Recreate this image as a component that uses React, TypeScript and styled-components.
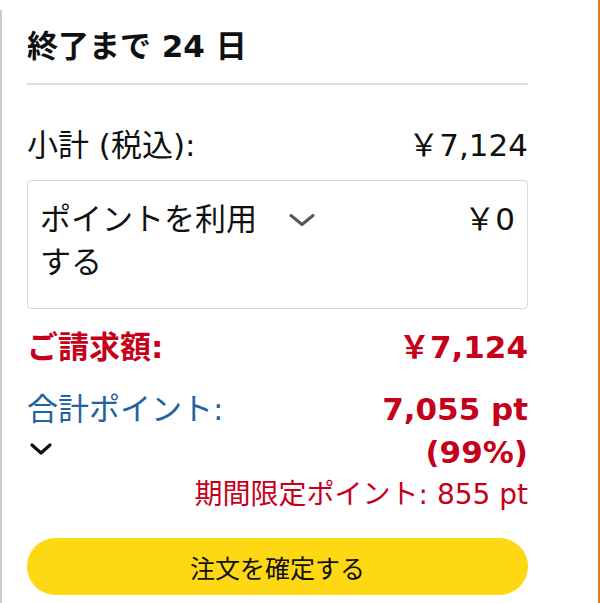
import styled, { createGlobalStyle } from 'styled-components'

const GlobalStyle = createGlobalStyle`
  html, body {
    margin: 0;
    padding: 0;
    background: #fff;
  }
  body {
    font-family: "DejaVu Sans", "Noto Sans CJK JP", sans-serif;
    color: #0f1111;
  }
`

const Page = styled.div`
  width: 600px;
  height: 603px;
  box-sizing: border-box;
  padding-top: 10px;
  border-right: 2px solid #e47911;
  overflow: hidden;
`

const Card = styled.div`
  height: 100%;
  box-sizing: border-box;
  border-left: 2px solid #cccccc;
  padding: 18px 70px 0 25px;
  display: flex;
  flex-direction: column;
`

const Title = styled.div`
  font-size: 31px;
  font-weight: 700;
  line-height: 36px;
  padding-bottom: 19px;
  border-bottom: 2px solid #dddddd;
`

const Row = styled.div<{ $top: number; $bold?: boolean; $red?: boolean }>`
  margin-top: ${(p) => p.$top}px;
  display: flex;
  justify-content: space-between;
  font-size: 31px;
  line-height: 40px;
  font-weight: ${(p) => (p.$bold ? 700 : 400)};
  color: ${(p) => (p.$red ? '#c7001a' : '#0f1111')};
`

const PointsBox = styled.div`
  margin-top: 15px;
  border: 1px solid #d5d9d9;
  border-radius: 4px;
  padding: 17px 12px 24px 12px;
  display: flex;
  align-items: flex-start;
  font-size: 31px;
  line-height: 43px;
`

const BoxLabel = styled.div`
  width: 226px;
`

const Chevron = styled.svg<{ $color: string }>`
  flex: none;
  stroke: ${(p) => p.$color};
  fill: none;
`

const BoxChevron = styled(Chevron)`
  margin: 16px 0 0 23px;
`

const BoxAmount = styled.div`
  margin-left: auto;
`

const PointsRow = styled.div`
  margin-top: 21px;
  display: flex;
  justify-content: space-between;
  font-size: 31px;
  line-height: 43px;
`

const PointsLeft = styled.div`
  display: flex;
  flex-direction: column;
  color: #2162a1;
`

const PointsChevron = styled(Chevron)`
  margin: 12px 0 0 3px;
`

const PointsRight = styled.div`
  text-align: right;
  font-weight: 700;
  color: #c7001a;
`

const Limited = styled.div`
  margin-top: 3px;
  text-align: right;
  font-size: 28px;
  line-height: 36px;
  color: #c7001a;
`

const PlaceButton = styled.button`
  margin-top: 25px;
  height: 57px;
  border: none;
  border-radius: 29px;
  background: #ffd814;
  font-family: inherit;
  font-size: 25px;
  color: #0f1111;
  cursor: pointer;
`

export default function App() {
  return (
    <>
      <GlobalStyle />
      <Page>
        <Card>
          <Title>終了まで 24 日</Title>
          <Row $top={40}>
            <span>小計 (税込):</span>
            <span>￥7,124</span>
          </Row>
          <PointsBox>
            <BoxLabel>ポイントを利用する</BoxLabel>
            <BoxChevron $color="#565959" width="26" height="12" viewBox="0 0 26 12">
              <polyline points="2,1.5 13,10.5 24,1.5" strokeWidth="3" strokeLinecap="round" strokeLinejoin="round" />
            </BoxChevron>
            <BoxAmount>￥0</BoxAmount>
          </PointsBox>
          <Row $top={18} $bold $red>
            <span>ご請求額:</span>
            <span>￥7,124</span>
          </Row>
          <PointsRow>
            <PointsLeft>
              <span>合計ポイント:</span>
              <PointsChevron $color="#0f1111" width="22" height="12" viewBox="0 0 22 12">
                <polyline points="2,2 11,10 20,2" strokeWidth="3.2" strokeLinecap="round" strokeLinejoin="round" />
              </PointsChevron>
            </PointsLeft>
            <PointsRight>
              <div>7,055 pt</div>
              <div>(99%)</div>
            </PointsRight>
          </PointsRow>
          <Limited>期間限定ポイント: 855 pt</Limited>
          <PlaceButton>注文を確定する</PlaceButton>
        </Card>
      </Page>
    </>
  )
}
